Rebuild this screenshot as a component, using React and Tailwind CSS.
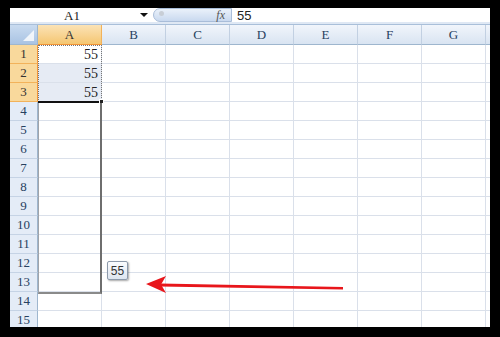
import React from 'react';

const cols = ['A', 'B', 'C', 'D', 'E', 'F', 'G', ''];
const rows = Array.from({ length: 15 }, (_, i) => i + 1);

const serif = "font-['SimSun','Liberation_Serif','DejaVu_Serif',serif]";

function FormulaBar() {
  return (
    <div className="flex h-[14px] items-center bg-white">
      <div className={`w-[124px] text-center text-[13px] leading-none text-[#222] ${serif}`}>A1</div>
      <div className="flex w-[19px] justify-center">
        <div className="h-0 w-0 border-x-[4px] border-t-[4px] border-x-transparent border-t-[#111]" />
      </div>
      <div className="relative flex h-[14px] w-[79px] items-center justify-end rounded-l-full border border-[#a9bdd9] bg-gradient-to-b from-[#eaf1fa] to-[#c9d9ef] pr-[6px]">
        <div className="absolute left-[5px] top-[2px] h-[5px] w-[5px] rounded-full bg-[#c8ced6]" />
        <span className={`text-[12px] italic leading-none text-[#555] ${serif}`}>fx</span>
      </div>
      <div className="ml-[5px] text-[13px] leading-none text-[#222] font-['Liberation_Sans',sans-serif]">55</div>
    </div>
  );
}

function ColHeader() {
  return (
    <div className="flex h-[20px] shrink-0">
      <div className="relative w-[28px] shrink-0 border-b border-r border-[#9eb6ce] bg-gradient-to-b from-[#c9dbf0] to-[#a9c3e3]">
        <div className="absolute bottom-[3px] right-[3px] h-0 w-0 border-b-[11px] border-l-[11px] border-b-white/80 border-l-transparent" />
      </div>
      {cols.map((c, i) => (
        <div
          key={i}
          className={`flex w-[64px] shrink-0 items-center justify-center border-b border-r text-[13px] ${serif} ${
            c === 'A'
              ? 'border-b-[#f29436] border-r-[#f2b25a] bg-gradient-to-b from-[#fbe3b6] to-[#f5c670] text-[#333]'
              : 'border-b-[#9eb6ce] border-r-[#c2d0e2] bg-gradient-to-b from-[#f1f5fb] to-[#d9e4f2] text-[#27415f]'
          }`}
        >
          {c}
        </div>
      ))}
    </div>
  );
}

function Row({ n }) {
  const sel = n <= 3;
  return (
    <div className="flex h-[19px] shrink-0">
      <div
        className={`flex w-[28px] shrink-0 items-center justify-center border-b border-r text-[13px] ${serif} ${
          sel
            ? 'border-b-[#f2b25a] border-r-[#f29436] bg-[#f9d99c] text-[#333]'
            : 'border-b-[#c5d3e5] border-r-[#9eb6ce] bg-[#e4ecf7] text-[#27415f]'
        }`}
      >
        {n}
      </div>
      {cols.map((c, i) => (
        <div
          key={i}
          className={`flex w-[64px] shrink-0 items-center justify-end border-b border-r border-[#dae0ea] pr-[3px] text-[14px] text-[#222] ${serif} ${
            c === 'A' && (n === 2 || n === 3) ? 'bg-[#e6ebf4]' : 'bg-white'
          }`}
        >
          {c === 'A' && sel ? '55' : ''}
        </div>
      ))}
    </div>
  );
}

export default function App() {
  return (
    <div className="relative h-[337px] w-[500px] overflow-hidden bg-black pl-[10px] pt-[8px]">
      <div className="flex h-[319px] w-[480px] flex-col overflow-hidden bg-white">
        <FormulaBar />
        <div className="h-[3px] shrink-0 border-b border-[#a9bfd9] bg-[#dfe8f4]" />
        <ColHeader />
        {rows.map((n) => (
          <Row key={n} n={n} />
        ))}
      </div>

      {/* copy selection A1:A3 */}
      <div className="absolute left-[38px] top-[45px] h-[57px] w-[64px] border border-dotted border-[#777]" />
      <div className="absolute left-[38px] top-[101px] h-[2px] w-[64px] bg-[#111]" />
      <div className="absolute left-[99px] top-[99px] h-[5px] w-[5px] border border-white bg-[#222]" />

      {/* fill range A4:A13 */}
      <div className="absolute left-[38px] top-[103px] h-[191px] w-[64px] border-b-2 border-l border-r-2 border-b-[#8a8a8a] border-l-[#a0a4aa] border-r-[#6e6e6e]" />

      {/* auto-fill tooltip */}
      <div className="absolute left-[107px] top-[261px] flex h-[19px] w-[21px] items-center justify-center rounded-[2px] border border-[#8d9aab] bg-gradient-to-b from-[#fbfcfe] to-[#dde5f0] text-[12px] text-[#333] shadow-[1px_1px_2px_rgba(0,0,0,0.35)] font-['Liberation_Sans',sans-serif]">
        55
      </div>

      {/* red arrow */}
      <svg className="absolute left-[140px] top-[272px]" width="210" height="26" viewBox="0 0 210 26">
        <path d="M20 11.5 L203 15 L203 17.5 L20 14.5 Z" fill="#e8161b" />
        <path d="M6 12 L26 4 L21 12.5 L26 21 Z" fill="#e8161b" />
      </svg>
    </div>
  );
}
